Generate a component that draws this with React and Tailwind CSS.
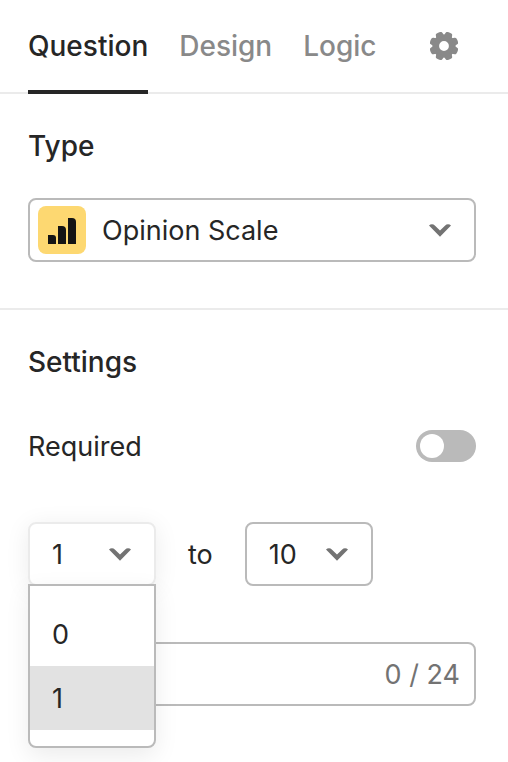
import { useState } from 'react';
import clsx from 'clsx';

const TABS = ['Question', 'Design', 'Logic'];
const TEETH = [0, 45, 90, 135, 180, 225, 270, 315];
const MAX_LENGTH = 24;

function GearIcon() {
  return (
    <svg viewBox="-14 -14 28 28" className="size-7" aria-hidden="true">
      <circle r="8.2" fill="none" stroke="currentColor" strokeWidth="6.6" />
      {TEETH.map((angle) => (
        <path
          key={angle}
          transform={`rotate(${angle + 22.5})`}
          d="M-4.4 -9 L-3.5 -12.8 Q-3.3 -13.9 -2.4 -14.3 Q0 -14.9 2.4 -14.3 Q3.3 -13.9 3.5 -12.8 L4.4 -9 Z"
          fill="currentColor"
        />
      ))}
    </svg>
  );
}

function ChevronIcon({ className }) {
  return (
    <svg
      viewBox="0 0 22 13"
      className={clsx('pointer-events-none h-[13px] w-[22px] text-[#737373]', className)}
      aria-hidden="true"
    >
      <path d="M0 1.6 Q1.2 0.3 3 0.3 Q4.6 0.3 5.8 1.4 L11 6.6 L16.2 1.4 Q17.4 0.3 19 0.3 Q20.8 0.3 22 1.6 L11 12.8 Z" fill="currentColor" />
    </svg>
  );
}

function ScaleIcon() {
  return (
    <span className="flex size-12 shrink-0 items-center justify-center rounded-lg bg-[#fdd871]">
      <svg viewBox="0 0 28 26" className="mt-[2px] h-[26px] w-7 text-[#141414]" aria-hidden="true">
        <path d="M0 17 H5 Q8 17 8 20 V26 H0 Z" fill="currentColor" />
        <path d="M10 8 H14 Q18 8 18 12 V26 H10 Z" fill="currentColor" />
        <path d="M20 0 H24 Q28 0 28 4 V26 H20 Z" fill="currentColor" />
      </svg>
    </span>
  );
}

function Tabs({ active, onChange }) {
  return (
    <nav className="flex h-[94px] items-stretch border-b-2 border-[#ebebeb] pr-8 pl-7 text-[28px] leading-10 font-medium">
      <div className="flex flex-1 gap-[31px]">
        {TABS.map((tab) => (
          <button
            key={tab}
            type="button"
            onClick={() => onChange(tab)}
            className={clsx(
              '-mb-[2px] cursor-pointer border-b-4 pt-[2px]',
              tab === active ? 'border-[#262626] text-[#262626]' : 'border-transparent text-[#898989]'
            )}
          >
            {tab}
          </button>
        ))}
      </div>
      <button type="button" aria-label="Options" className="cursor-pointer px-[18px] text-[#898989]">
        <GearIcon />
      </button>
    </nav>
  );
}

function RangeStart() {
  const [value, setValue] = useState('1');
  const [open, setOpen] = useState(true);

  return (
    <div className={clsx('relative w-32 rounded-lg', open && 'shadow-[0_4px_24px_rgba(0,0,0,0.08)]')}>
      <div
        className={clsx(
          'grid h-16 items-center rounded-lg border-2 bg-white',
          open ? 'border-[#ebebeb]' : 'border-[#bababa]'
        )}
      >
        <select
          aria-label="From"
          value={value}
          onChange={(e) => setValue(e.target.value)}
          onMouseDown={(e) => {
            e.preventDefault();
            setOpen(!open);
          }}
          className="col-start-1 row-start-1 h-full w-full cursor-pointer appearance-none pt-[2px] pl-[22px] outline-none"
        >
          <option>0</option>
          <option>1</option>
        </select>
        <ChevronIcon className="col-start-1 row-start-1 mr-[23px] justify-self-end" />
      </div>

      {open && (
        <ul className="absolute inset-x-0 top-[62px] z-10 rounded-b-lg border-2 border-[#bababa] bg-white py-4 shadow-[0_8px_24px_rgba(0,0,0,0.08)]">
          {['0', '1'].map((option) => (
            <li key={option}>
              <button
                type="button"
                onClick={() => {
                  setValue(option);
                  setOpen(false);
                }}
                className={clsx(
                  'block h-16 w-full cursor-pointer pt-[2px] pl-[22px] text-left',
                  option === value && 'bg-[#e2e2e2]'
                )}
              >
                {option}
              </button>
            </li>
          ))}
        </ul>
      )}
    </div>
  );
}

export default function App() {
  const [tab, setTab] = useState('Question');
  const [required, setRequired] = useState(false);
  const [text, setText] = useState('');

  return (
    <div className="min-h-screen bg-white font-['Inter',sans-serif] text-[27px] leading-10 text-[#262626]">
      <Tabs active={tab} onChange={setTab} />

      <section className="border-b-2 border-[#ebebeb] pt-8 pr-8 pb-[46px] pl-7">
        <label htmlFor="type" className="block text-[28px] leading-10 font-medium">Type</label>
        <div className="mt-8 grid h-16 items-center rounded-lg border-2 border-[#bababa]">
          <select
            id="type"
            className="col-start-1 row-start-1 h-full w-full cursor-pointer appearance-none pt-[2px] pl-[72px] outline-none"
          >
            <option>Opinion Scale</option>
          </select>
          <div className="pointer-events-none col-start-1 row-start-1 flex items-center justify-between pr-[23px] pl-2">
            <ScaleIcon />
            <ChevronIcon />
          </div>
        </div>
      </section>

      <section className="pt-8 pr-8 pl-7">
        <h2 className="text-[28px] leading-10 font-medium">Settings</h2>

        <div className="mt-11 flex h-10 items-center justify-between">
          <label htmlFor="required" className="pt-[2px]">Required</label>
          <input
            id="required"
            type="checkbox"
            role="switch"
            checked={required}
            onChange={(e) => setRequired(e.target.checked)}
            className="h-8 w-15 cursor-pointer appearance-none rounded-full bg-[#bababa] p-1 before:block before:size-6 before:rounded-full before:bg-white checked:bg-[#262626] checked:before:ml-7"
          />
        </div>

        <div className="mt-14 flex items-center gap-8">
          <RangeStart />
          <label htmlFor="range-end" className="pt-[2px]">to</label>
          <div className="grid h-16 w-32 items-center rounded-lg border-2 border-[#bababa]">
            <select
              id="range-end"
              defaultValue="10"
              className="col-start-1 row-start-1 h-full w-full cursor-pointer appearance-none pt-[2px] pl-[22px] outline-none"
            >
              {[5, 6, 7, 8, 9, 10].map((n) => (
                <option key={n}>{n}</option>
              ))}
            </select>
            <ChevronIcon className="col-start-1 row-start-1 mr-[23px] justify-self-end" />
          </div>
        </div>

        <div className="mt-14 flex h-16 items-center rounded-lg border-2 border-[#bababa] px-[14px]">
          <input
            type="text"
            aria-label="Label"
            maxLength={MAX_LENGTH}
            value={text}
            onChange={(e) => setText(e.target.value)}
            className="h-full min-w-0 flex-1 outline-none"
          />
          <span className="pt-[2px] text-[#737373]">{text.length} / {MAX_LENGTH}</span>
        </div>
      </section>
    </div>
  );
}
